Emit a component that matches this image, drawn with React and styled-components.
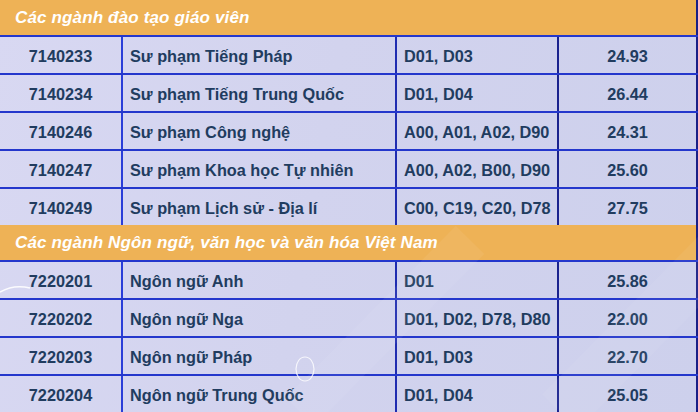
import React from "react"
import styled, { createGlobalStyle } from "styled-components"

const GlobalStyle = createGlobalStyle`
  html, body {
    margin: 0;
    padding: 0;
    background: #d2d2ee;
  }
  body {
    font-family: "Liberation Sans", Arial, sans-serif;
  }
`

const Board = styled.div`
  position: relative;
  width: 698px;
  height: 412px;
  overflow: hidden;
  background: linear-gradient(100deg, #d8d8f2 0%, #d2d3ee 45%, #cdd0ec 100%);
`

const GroupHeader = styled.div`
  height: 35px;
  display: flex;
  align-items: center;
  padding-left: 15px;
  background: #eeb256;
  border-right: 2px solid #1a1f86;
  color: #ffffff;
  font-size: 17px;
  font-weight: bold;
  font-style: italic;
  letter-spacing: 0.15px;
  box-sizing: border-box;
`

const Row = styled.div`
  display: grid;
  grid-template-columns: 123px 274px 162px 139px;
  height: 38px;
  box-sizing: border-box;
  border-top: 2px solid #2437cc;
`

const Cell = styled.div`
  display: flex;
  align-items: center;
  justify-content: ${(p) => (p.$center ? "center" : "flex-start")};
  padding-left: ${(p) => (p.$center ? "0" : "7px")};
  padding-top: 3px;
  border-right: 2px solid ${(p) => p.$line};
  color: #213c5f;
  font-size: 16.3px;
  font-weight: bold;
  white-space: nowrap;
  box-sizing: border-box;
`

const Decor = styled.svg`
  position: absolute;
  inset: 0;
  pointer-events: none;
`

const groups = [
  {
    title: "Các ngành đào tạo giáo viên",
    rows: [
      ["7140233", "Sư phạm Tiếng Pháp", "D01, D03", "24.93"],
      ["7140234", "Sư phạm Tiếng Trung Quốc", "D01, D04", "26.44"],
      ["7140246", "Sư phạm Công nghệ", "A00, A01, A02, D90", "24.31"],
      ["7140247", "Sư phạm Khoa học Tự nhiên", "A00, A02, B00, D90", "25.60"],
      ["7140249", "Sư phạm Lịch sử - Địa lí", "C00, C19, C20, D78", "27.75"],
    ],
  },
  {
    title: "Các ngành Ngôn ngữ, văn học và văn hóa Việt Nam",
    rows: [
      ["7220201", "Ngôn ngữ Anh", "D01", "25.86"],
      ["7220202", "Ngôn ngữ Nga", "D01, D02, D78, D80", "22.00"],
      ["7220203", "Ngôn ngữ Pháp", "D01, D03", "22.70"],
      ["7220204", "Ngôn ngữ Trung Quốc", "D01, D04", "25.05"],
    ],
  },
]

const App = () => {
  return (
    <>
      <GlobalStyle />
      <Board>
        {groups.map((g) => (
          <div key={g.title}>
            <GroupHeader>{g.title}</GroupHeader>
            {g.rows.map((r) => (
              <Row key={r[0]}>
                <Cell $center $line="#2a3ed8">{r[0]}</Cell>
                <Cell $line="#1f2cb0">{r[1]}</Cell>
                <Cell $line="#1a228e">{r[2]}</Cell>
                <Cell $center $line="#1a1f86">{r[3]}</Cell>
              </Row>
            ))}
          </div>
        ))}
        <Decor width="698" height="412" viewBox="0 0 698 412">
          <path d="M0 292 Q14 284 30 288" stroke="#ffffff" strokeWidth="1.5" fill="none" opacity="0.9" />
          <ellipse cx="305" cy="369" rx="9" ry="12" stroke="#ffffff" strokeWidth="1.2" fill="none" opacity="0.8" />
          <path d="M300 412 L470 240" stroke="#ffffff" strokeWidth="40" opacity="0.06" />
          <path d="M560 412 L720 250" stroke="#ffffff" strokeWidth="50" opacity="0.05" />
        </Decor>
      </Board>
    </>
  )
}

export default App
